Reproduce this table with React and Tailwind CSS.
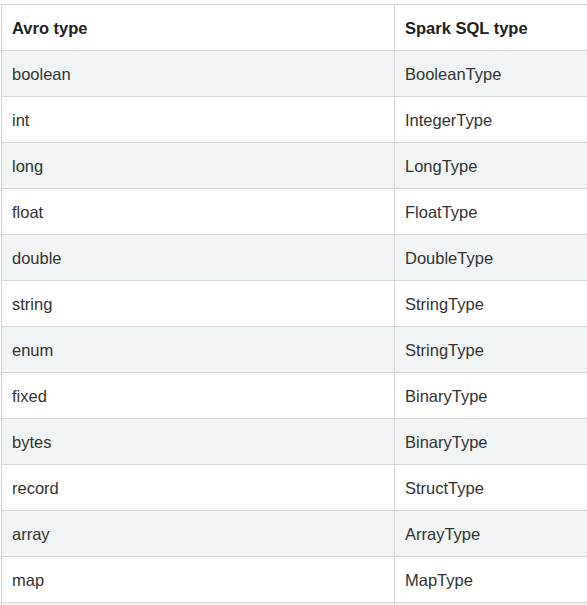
import React from "react";

const rows = [
  ["boolean", "BooleanType"],
  ["int", "IntegerType"],
  ["long", "LongType"],
  ["float", "FloatType"],
  ["double", "DoubleType"],
  ["string", "StringType"],
  ["enum", "StringType"],
  ["fixed", "BinaryType"],
  ["bytes", "BinaryType"],
  ["record", "StructType"],
  ["array", "ArrayType"],
  ["map", "MapType"],
  ["", ""],
];

export default function App() {
  return (
    <div className="w-[587px] h-[605px] overflow-hidden bg-white pt-[4px] pl-[1px]" style={{ fontFamily: '"Liberation Sans", Arial, sans-serif' }}>
      <table className="border-collapse w-[800px] table-fixed text-[16.5px] text-[#333]">
        <colgroup>
          <col className="w-[393px]" />
          <col />
        </colgroup>
        <thead>
          <tr className="h-[46px]">
            <th className="border border-[#d6d6d6] px-[10px] pt-[1px] text-left font-bold text-[#222]">Avro type</th>
            <th className="border border-[#d6d6d6] px-[10px] pt-[1px] text-left font-bold text-[#222]">Spark SQL type</th>
          </tr>
        </thead>
        <tbody>
          {rows.map(([a, b], i) => (
            <tr key={i} className={"h-[46px] " + (i % 2 === 0 ? "bg-[#f0f4f4]" : "bg-white")}>
              <td className="border border-[#d6d6d6] px-[10px] pt-[1px]">{a}</td>
              <td className="border border-[#d6d6d6] px-[10px] pt-[1px]">{b}</td>
            </tr>
          ))}
        </tbody>
      </table>
    </div>
  );
}
